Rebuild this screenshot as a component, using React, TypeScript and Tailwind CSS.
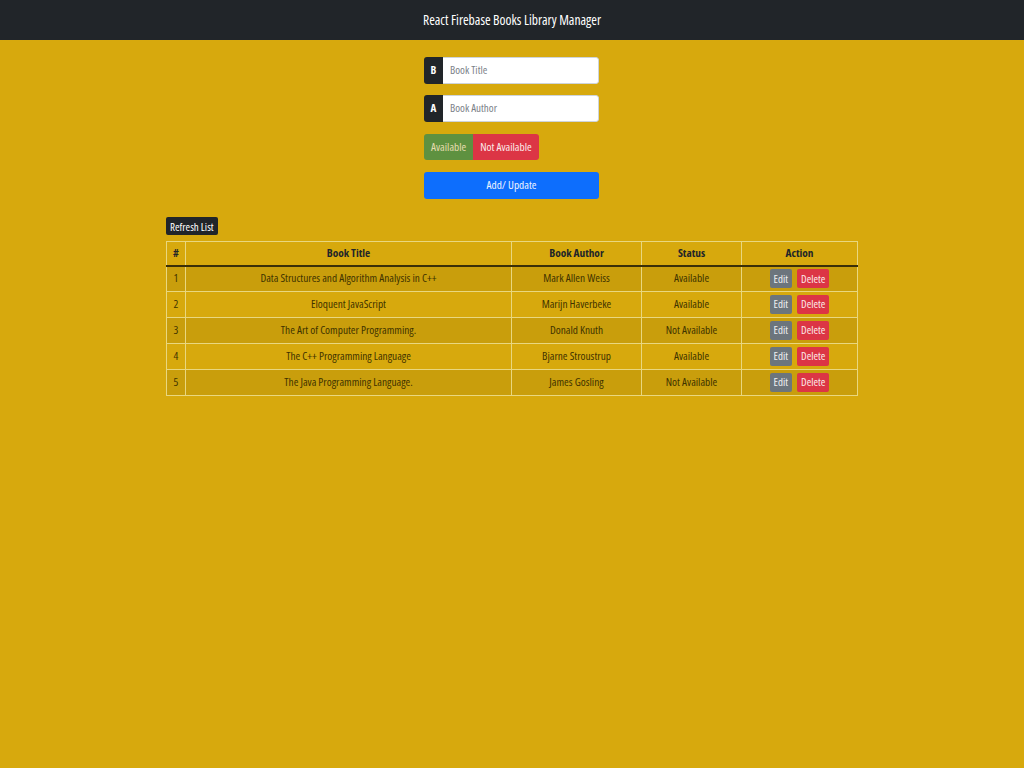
const books = [
  { title: 'Data Structures and Algorithm Analysis in C++', author: 'Mark Allen Weiss', status: 'Available' },
  { title: 'Eloquent JavaScript', author: 'Marijn Haverbeke', status: 'Available' },
  { title: 'The Art of Computer Programming.', author: 'Donald Knuth', status: 'Not Available' },
  { title: 'The C++ Programming Language', author: 'Bjarne Stroustrup', status: 'Available' },
  { title: 'The Java Programming Language.', author: 'James Gosling', status: 'Not Available' },
]

export default function App() {
  return (
    <div className="min-h-[768px] bg-[#d7a90d] font-['Open_Sans',sans-serif] [font-stretch:75%]">
      <nav className="h-10 bg-[#212529] flex items-center justify-center">
        <span className="text-white text-[13.6px]">React Firebase Books Library Manager</span>
      </nav>

      <div className="w-[175px] ml-[424px] mt-[17px]">
        <div className="flex h-[27px] rounded-[3px] overflow-hidden">
          <span className="w-[19px] bg-[#212529] text-white text-[11px] font-bold flex items-center justify-center">B</span>
          <input
            placeholder="Book Title"
            className="flex-1 min-w-0 bg-white px-[7px] text-[11px] text-gray-700 placeholder:text-[#7b8188] outline-none border border-l-0 border-[#ced4da] rounded-r-[3px]"
          />
        </div>
        <div className="flex h-[27px] rounded-[3px] overflow-hidden mt-[11px]">
          <span className="w-[19px] bg-[#212529] text-white text-[11px] font-bold flex items-center justify-center">A</span>
          <input
            placeholder="Book Author"
            className="flex-1 min-w-0 bg-white px-[7px] text-[11px] text-gray-700 placeholder:text-[#7b8188] outline-none border border-l-0 border-[#ced4da] rounded-r-[3px]"
          />
        </div>
        <div className="flex mt-[12px] h-[26px]">
          <button className="px-[7px] bg-[#5e9140] text-[#e4dcae] text-[11.3px] font-normal rounded-l-[3px]">Available</button>
          <button className="px-[7px] bg-[#dc3545] text-[#fbeaea] text-[11.3px] font-normal rounded-r-[3px]">Not Available</button>
        </div>
        <button className="mt-[12px] w-full h-[27px] bg-[#0d6efd] text-[#eef4ff] text-[11.3px] font-normal rounded-[3px]">Add/ Update</button>
      </div>

      <div className="w-[692px] ml-[166px] mt-[18px]">
        <div className="flex">
          <button className="h-[18px] px-[4px] bg-[#212529] text-white text-[11px] font-normal rounded-[2px] leading-none">Refresh List</button>
        </div>
        <table className="w-full mt-[6px] border-collapse text-[11.3px] text-[#3f3300]">
          <thead>
            <tr className="h-[24px] border-b-2 border-[#3a2f08]">
              <th className="w-[19px] border border-[#e9d77f] font-bold text-[#212529]">#</th>
              <th className="w-[326px] border border-[#e9d77f] font-bold text-[#212529]">Book Title</th>
              <th className="w-[130px] border border-[#e9d77f] font-bold text-[#212529]">Book Author</th>
              <th className="w-[100px] border border-[#e9d77f] font-bold text-[#212529]">Status</th>
              <th className="border border-[#e9d77f] font-bold text-[#212529]">Action</th>
            </tr>
          </thead>
          <tbody>
            {books.map((b, i) => (
              <tr key={i} className={`h-[26px] ${i % 2 === 0 ? 'bg-[#c99e0c]' : ''}`}>
                <td className="border border-[#e9d77f] text-center">{i + 1}</td>
                <td className="border border-[#e9d77f] text-center">{b.title}</td>
                <td className="border border-[#e9d77f] text-center">{b.author}</td>
                <td className="border border-[#e9d77f] text-center">{b.status}</td>
                <td className="border border-[#e9d77f] text-center">
                  <div className="flex justify-center gap-[5px]">
                    <button className="h-[19px] px-[4px] bg-[#6c757d] text-[#eef0f2] text-[11px] font-normal rounded-[2px]">Edit</button>
                    <button className="h-[19px] px-[4px] bg-[#dc3545] text-[#fbeaea] text-[11px] font-normal rounded-[2px]">Delete</button>
                  </div>
                </td>
              </tr>
            ))}
          </tbody>
        </table>
      </div>
    </div>
  )
}
